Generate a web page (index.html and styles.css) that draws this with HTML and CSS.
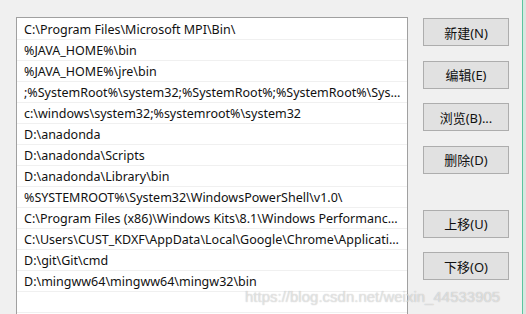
FILE: index.html
```html
<!DOCTYPE html>
<html lang="zh-CN">
<head>
  <meta charset="UTF-8" />
  <meta name="viewport" content="width=device-width, initial-scale=1.0" />
  <title>编辑环境变量</title>
  <link rel="stylesheet" href="styles.css">
</head>
<body>
  <div class="dialog">
    <ul class="path-list">
      <li>C:\Program Files\Microsoft MPI\Bin\</li>
      <li>%JAVA_HOME%\bin</li>
      <li>%JAVA_HOME%\jre\bin</li>
      <li>;%SystemRoot%\system32;%SystemRoot%;%SystemRoot%\System32\Wbem</li>
      <li>c:\windows\system32;%systemroot%\system32</li>
      <li>D:\anadonda</li>
      <li>D:\anadonda\Scripts</li>
      <li>D:\anadonda\Library\bin</li>
      <li>%SYSTEMROOT%\System32\WindowsPowerShell\v1.0\</li>
      <li>C:\Program Files (x86)\Windows Kits\8.1\Windows Performance Toolkit\</li>
      <li>C:\Users\CUST_KDXF\AppData\Local\Google\Chrome\Application</li>
      <li>D:\git\Git\cmd</li>
      <li>D:\mingww64\mingww64\mingw32\bin</li>
      <li></li>
      <li></li>
    </ul>

    <div class="actions">
      <button>新建(N)</button>
      <button>编辑(E)</button>
      <button>浏览(B)...</button>
      <button>删除(D)</button>
      <button class="move-up">上移(U)</button>
      <button>下移(O)</button>
    </div>

    <div class="side-strip"></div>
  </div>

  <div class="watermark">https://blog.csdn.net/weixin_44533905</div>
</body>
</html>
```

FILE: styles.css
```css
* {
  box-sizing: border-box;
  margin: 0;
  padding: 0;
}

body {
  font-family: "Noto Sans", "Noto Sans CJK SC", sans-serif;
  background-color: #f0f0f0;
  color: #111;
  width: 526px;
  height: 314px;
  overflow: hidden;
  position: relative;
}

.dialog {
  display: flex;
  align-items: flex-start;
  height: 100%;
}

.path-list {
  list-style: none;
  margin: 17px 0 0 16px;
  width: 392px;
  height: 297px;
  overflow: hidden;
  background-color: #fff;
  border: 1px solid #a0a0a0;
  border-bottom: none;
  padding-top: 1px;
}

.path-list li {
  height: 21px;
  line-height: 21px;
  font-size: 12.5px;
  padding: 0 5px 0 7px;
  border-bottom: 1px solid #f0f0f0;
  white-space: nowrap;
  overflow: hidden;
  text-overflow: ellipsis;
}

.actions {
  display: flex;
  flex-direction: column;
  gap: 14.5px;
  margin: 18px 0 0 15px;
  width: 86px;
}

.actions button {
  height: 28px;
  background-color: #e1e1e1;
  border: 1px solid #adadad;
  font-family: "Noto Sans", "Noto Sans CJK SC", sans-serif;
  font-size: 13px;
  color: #111;
}

.actions .move-up {
  margin-top: 21.5px;
}

.side-strip {
  margin-left: 13px;
  width: 4px;
  height: 100%;
  border-left: 1px solid #5cc59e;
  background-color: #d9e6e0;
}

.watermark {
  position: absolute;
  left: 245px;
  top: 288px;
  font-family: "Liberation Sans", Arial, sans-serif;
  font-size: 15px;
  color: rgba(255, 255, 255, 0.55);
  text-shadow: 0 0 1px rgba(0, 0, 0, 0.3);
}
```
